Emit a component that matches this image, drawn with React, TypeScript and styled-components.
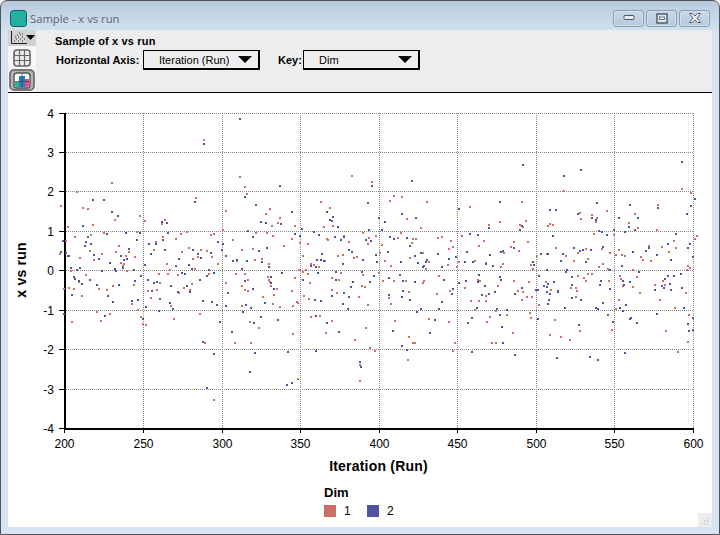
import React from 'react';
import styled, { createGlobalStyle } from 'styled-components';

type Point = [number, number];

const GlobalStyle = createGlobalStyle`
  html, body {
    margin: 0;
    padding: 0;
    background: #ffffff;
  }
`;

const parsePoints = (raw: string): Point[] =>
    raw.trim().split(/\s+/).map((pair) => {
        const [x, y] = pair.split(',').map(Number);
        return [x, y] as Point;
    });

// upper half of the plot, in page pixels
const RED_TOP = parsePoints(`
204,140 112,183 77,192 196,198 61,206 83,208 88,209 140,216 115,220 165,220
68,227 93,225 145,221 162,224 75,237 91,235 104,233 137,232 163,237 176,239 181,234 187,232 211,235 214,234
66,241 156,242 119,246 154,250 189,248 90,251 116,252 129,252 182,252 201,250 207,251 102,254 126,256 60,254
80,258 94,260 135,257 198,257 193,259 212,257 121,263 124,264 123,266 167,264 218,264 71,271 127,271 170,270 195,269
240,177 352,176 372,182 245,187 247,194 394,196 402,197 390,201 321,202 427,202 330,208 270,209 226,211 266,214 280,218
407,219 278,223 272,226 295,226 324,227 333,226 421,228 223,230 256,233 267,233 363,233 401,233 273,236 344,236 376,236
292,239 327,239 328,240 233,240 369,238 398,238 413,239 416,239 438,238 442,237 451,241 300,243 308,244 349,242 368,244
412,243 284,246 382,245 453,247 242,250 253,249 449,249 380,253 343,255 338,256 303,256 354,258 357,257 410,258 423,253
255,260 262,259 237,261 325,261 385,261 429,262 459,262 269,264 311,264 314,265 319,267 391,266 448,265 457,267 426,269 299,270 306,270
682,189 564,191 691,193 522,202 470,207 658,205 607,211 580,213 635,214 592,215 581,219 597,218 526,221 500,222 596,222
629,223 550,224 553,225 548,226 489,225 520,225 523,227 638,228 657,230 594,234 614,235 462,236 697,236 695,239 484,241
514,242 528,242 674,241 479,246 511,247 556,248 649,246 662,247 676,248 586,249 602,249 619,250 519,251 504,253 578,253
610,253 669,252 547,254 537,256 566,256 616,255 622,255 625,256 641,257 588,259 643,260 651,261 475,261 574,261 486,263
503,264 531,265 603,264 501,267 533,269 599,267 608,269 688,266 690,268 633,270 687,270
`);

const BLUE_TOP = parsePoints(`
204,144 93,200 104,200 195,202 112,212 118,216 83,226 162,222 167,223 107,234 126,233 140,233 168,233 88,237 137,240 163,240
63,241 86,242 91,244 85,246 149,244 156,244 218,242 129,249 165,250 193,250 61,252 66,253 94,255 121,256 151,254 198,254 211,253
68,256 69,256 99,259 124,260 127,259 179,259 201,258 110,263 145,265 176,266 189,265 71,268 80,268 115,269 123,268 192,269 77,270
240,119 280,186 372,186 412,181 245,197 256,205 368,203 292,212 327,212 402,214 459,209 333,217 330,220 332,221 379,218 416,218
261,222 266,223 281,224 385,222 338,227 302,229 248,231 369,230 382,230 314,232 295,234 319,235 300,236 253,237 335,237 344,237
390,237 394,239 407,238 341,240 366,240 371,241 223,244 410,246 267,248 222,250 259,251 349,250 352,252 388,252 421,253 322,254
376,255 438,254 226,256 415,256 456,257 317,260 321,260 324,261 233,261 237,260 247,261 363,260 427,260 449,259 262,262 377,262
401,262 426,262 343,264 418,263 311,266 316,267 269,267 424,266 442,267 423,267 242,269
523,165 682,162 581,170 564,176 500,202 597,203 630,205 658,208 691,206 695,199 550,210 556,210 578,214 687,214 592,218 619,218
638,218 596,220 629,227 489,228 522,226 520,230 599,231 602,232 614,230 625,232 635,230 470,234 478,235 553,236 607,235 676,234
690,244 668,244 603,247 574,248 514,248 649,248 688,248 591,250 583,250 580,251 467,252 501,252 503,251 633,252 646,251 541,254
548,254 563,254 490,255 657,255 693,257 561,261 671,260 465,262 473,262 533,262 586,262 486,264 534,265 493,266 622,266 547,270
567,270 610,270
`);

// lower half, sparse points read off the screenshot
const RED_LOW = parsePoints(`
64,289 69,288 74,289 79,282 82,296 86,275 97,312 99,289 107,290 110,314 113,286 132,304 134,285 138,310 141,317 143,324 146,325
148,291 151,298 157,290 159,274 160,283 168,274 171,306 174,319 178,275 179,293 184,288 190,290 192,284 200,314 209,274 72,322 101,321
214,400 205,343 360,381 360,365 408,360 375,351 453,351 496,343 298,379 370,348 250,322 293,334 487,322 678,352 612,330 561,337
`);

const BLUE_LOW = parsePoints(`
72,295 74,277 75,279 79,281 82,284 90,280 97,285 102,271 108,296 113,302 116,271 119,285 132,301 134,270 135,281 138,300 141,276
143,319 146,307 148,280 152,291 154,283 157,282 160,299 170,303 171,286 173,309 178,292 182,273 185,274 187,286 190,292 200,280
203,301 207,276 209,270 212,302 214,273 217,305 220,322 64,314 105,316 159,311
207,388 287,385 360,362 361,367 250,372 288,352 316,351 292,383 214,354 203,342 255,353 472,352 515,355 407,350 590,357 598,360
625,353 557,358 402,346 339,332 430,333 693,318
`);

// rest of the lower cloud from a seeded generator
const scatterLow = (seed: number, count: number): Point[] => {
    let s = seed;
    const next = () => {
        s = (s * 1664525 + 1013904223) % 4294967296;
        return s / 4294967296;
    };
    const list: Point[] = [];
    for (let i = 0; i < count; i++) {
        const x = Math.round(222 + next() * 472);
        const spread = Math.abs(Math.sqrt(-2 * Math.log(next() + 0.0001)) * Math.cos(6.283 * next()));
        list.push([x, Math.round(272 + Math.min(spread, 2.1) * 34)]);
    }
    return list;
};

const RED_POINTS = [...RED_TOP, ...RED_LOW, ...scatterLow(17, 125)];
const BLUE_POINTS = [...BLUE_TOP, ...BLUE_LOW, ...scatterLow(4242, 125)];

const X_TICKS = [
    { x: 64.5, label: '200' },
    { x: 143.5, label: '250' },
    { x: 222.5, label: '300' },
    { x: 300.5, label: '350' },
    { x: 379.5, label: '400' },
    { x: 457.5, label: '450' },
    { x: 536.5, label: '500' },
    { x: 614.5, label: '550' },
    { x: 693.5, label: '600' },
];

const Y_TICKS = [
    { y: 113.5, label: '4' },
    { y: 152.5, label: '3' },
    { y: 191.5, label: '2' },
    { y: 231.5, label: '1' },
    { y: 270.5, label: '0' },
    { y: 310.5, label: '-1' },
    { y: 349.5, label: '-2' },
    { y: 389.5, label: '-3' },
    { y: 428.5, label: '-4' },
];

const RED = '#cc6f66';
const BLUE = '#50549c';

const PlotChart = () => (
    <Plot viewBox="8 93 704 387" width={704} height={387}>
        {Y_TICKS.map((t) => (
            <g key={t.label}>
                <line x1={66} x2={693} y1={t.y} y2={t.y} stroke="#888" strokeDasharray="1 1" />
                <line x1={59} x2={65} y1={t.y} y2={t.y} stroke="#000" />
                <TickText x={54} y={t.y + 4.5} textAnchor="end">{t.label}</TickText>
            </g>
        ))}
        {X_TICKS.map((t, i) => (
            <g key={t.label}>
                {i > 0 && <line x1={t.x} x2={t.x} y1={113} y2={428} stroke="#888" strokeDasharray="1 1" />}
                <line x1={t.x} x2={t.x} y1={428} y2={433} stroke="#000" />
                <TickText x={t.x} y={447.5} textAnchor="middle">{t.label}</TickText>
            </g>
        ))}
        <rect x={64} y={113} width={2} height={317} fill="#000" />
        <rect x={64} y={428} width={630} height={2} fill="#000" />
        {RED_POINTS.map(([x, y], i) => (
            <rect key={`r${i}`} x={x - 1} y={y - 1} width={2} height={2} fill={RED} />
        ))}
        {BLUE_POINTS.map(([x, y], i) => (
            <rect key={`b${i}`} x={x - 1} y={y - 1} width={2} height={2} fill={BLUE} />
        ))}
        <AxisTitle x={378.5} y={471} textAnchor="middle">Iteration (Run)</AxisTitle>
        <AxisTitle x={0} y={0} textAnchor="middle" transform="translate(26 270) rotate(-90)">x vs run</AxisTitle>
    </Plot>
);

const AppIcon = () => (
    <svg width="17" height="17" viewBox="0 0 17 17">
        <rect x="0.5" y="0.5" width="16" height="16" rx="3" fill="#17b5a6" stroke="#2f4f58" />
        <path d="M8.5 1.5v14M1.5 8.5h14" stroke="#5b9c98" />
    </svg>
);

const ScatterGlyph = () => (
    <svg width="28" height="16" viewBox="0 0 28 16">
        <path d="M3.5 1v12.5H19" fill="none" stroke="#222" />
        <path
            d="M6 11h1M8 9h1M10 11h1M7 7h1M10 7h1M12 9h1M14 11h1M9 5h1M12 5h1M14 7h1M16 9h1M11 3h1M14 4h1"
            stroke="#333"
        />
        <path d="M18 5h9l-4.500 5z" fill="#000" />
    </svg>
);

const GridGlyph = () => (
    <svg width="18" height="18" viewBox="0 0 18 18">
        <rect x="1" y="1" width="16" height="16" rx="3" fill="#ececec" stroke="#666" strokeWidth="1.600" />
        <path d="M6.500 1v16M11.500 1v16M1 6.500h16M1 11.500h16" stroke="#666" strokeWidth="1.200" />
    </svg>
);

const ColorGridGlyph = () => (
    <svg width="18" height="17" viewBox="0 0 18 17">
        <rect x="1" y="1" width="16" height="15" rx="3" fill="#fff" stroke="#555" strokeWidth="1.400" />
        <path d="M2 10h4v5H4.500A2.500 2.500 0 0 1 2 12.500z" fill="#1fb58f" />
        <rect x="6" y="4" width="6" height="11" fill="#1d82c8" />
        <path d="M12 7h4v5.500a2.500 2.500 0 0 1-2.500 2.500H12z" fill="#e2478f" />
        <path d="M2 9.500h14M9 1.500v14" stroke="#444" strokeWidth="0.800" />
    </svg>
);

const Minimize = () => (
    <svg width="14" height="8" viewBox="0 0 14 8">
        <rect x="0.500" y="1.500" width="10" height="4" rx="1" fill="#e9edf2" stroke="#4a5566" transform="translate(1.500 0)" />
    </svg>
);

const Maximize = () => (
    <svg width="12" height="11" viewBox="0 0 12 11">
        <rect x="1" y="1" width="10" height="9" fill="#dfe6ee" stroke="#4a5566" strokeWidth="1.400" />
        <rect x="3.500" y="4" width="5" height="2.500" fill="#f4f6f8" stroke="#4a5566" strokeWidth="0.800" />
    </svg>
);

const CloseIcon = () => (
    <svg width="14" height="12" viewBox="0 0 14 12">
        <path d="M1.500 1.500h3L7 4l2.500-2.500h3L9 6l3.500 4.500h-3L7 8l-2.500 2.500h-3L5 6z" fill="#eef1f4" stroke="#59626f" />
    </svg>
);

export default function App() {
    return (
        <>
            <GlobalStyle />
            <Window>
                <TitleBar>
                    <AppIcon />
                    <WindowTitle>Sample - x vs run</WindowTitle>
                    <WindowButtons>
                        <WindowButton><Minimize /></WindowButton>
                        <WindowButton><Maximize /></WindowButton>
                        <WindowButton><CloseIcon /></WindowButton>
                    </WindowButtons>
                </TitleBar>
                <Panel>
                    <Toolbar>
                        <ToolColumn>
                            <StyleButton><ScatterGlyph /></StyleButton>
                            <GridButton><GridGlyph /></GridButton>
                            <ColorButton><ColorGridGlyph /></ColorButton>
                        </ToolColumn>
                        <Controls>
                            <Heading>Sample of x vs run</Heading>
                            <ControlRow>
                                <Label>Horizontal Axis:</Label>
                                <Dropdown>
                                    <span>Iteration (Run)</span>
                                    <Arrow />
                                </Dropdown>
                                <KeyLabel>Key:</KeyLabel>
                                <Dropdown>
                                    <span>Dim</span>
                                    <Arrow />
                                </Dropdown>
                            </ControlRow>
                        </Controls>
                    </Toolbar>
                    <PlotChart />
                    <Legend>
                        <LegendTitle>Dim</LegendTitle>
                        <LegendRow>
                            <Swatch $color={RED} />
                            <LegendValue>1</LegendValue>
                            <Swatch $color={BLUE} />
                            <LegendValue>2</LegendValue>
                        </LegendRow>
                    </Legend>
                    <Grip>
                        <svg width="14" height="14" viewBox="0 0 14 14">
                            <path d="M9 5h2M6 8h2M9 8h2M3 11h2M6 11h2M9 11h2" stroke="#a9a9a9" strokeWidth="1.200" strokeDasharray="1.200 1" />
                        </svg>
                    </Grip>
                </Panel>
            </Window>
        </>
    );
}

const Window = styled.div`
  width: 720px;
  height: 535px;
  box-sizing: border-box;
  display: flex;
  flex-direction: column;
  border: 1px solid #4f5358;
  border-radius: 7px 7px 0 0;
  background: linear-gradient(180deg, #b7cbdd 0px, #d6e4f2 34px);
  overflow: hidden;
`;

const TitleBar = styled.div`
  height: 29px;
  flex: none;
  box-sizing: border-box;
  display: flex;
  align-items: center;
  padding: 5px 9px 0 9px;
`;

const WindowTitle = styled.div`
  margin-left: 3px;
  font: 11.25px "Open Sans", "Liberation Sans", sans-serif;
  color: #5d6670;
`;

const WindowButtons = styled.div`
  margin-left: auto;
  display: flex;
  gap: 2px;
`;

const WindowButton = styled.div`
  width: 31px;
  height: 17px;
  box-sizing: border-box;
  display: flex;
  align-items: center;
  justify-content: center;
  border: 1px solid #8a9fb6;
  border-radius: 3px;
  background: linear-gradient(180deg, #c8d8e8, #b6cade);
  box-shadow: inset 0 0 0 1px #d4e0ec;
`;

const Panel = styled.div`
  position: relative;
  flex: 1;
  margin: 0 7px 7px 7px;
  background: #ffffff;
`;

const Toolbar = styled.div`
  height: 63px;
  box-sizing: border-box;
  display: flex;
  background: #ededed;
  border-bottom: 1px solid #000;
`;

const ToolColumn = styled.div`
  width: 28px;
  display: flex;
  flex-direction: column;
  align-items: center;
  background: #f7f7f7;
`;

const StyleButton = styled.div`
  width: 28px;
  height: 16px;
  background: #d2d2d2;
  line-height: 0;
`;

const GridButton = styled.div`
  height: 18px;
  margin-top: 3px;
  line-height: 0;
`;

const ColorButton = styled.div`
  width: 26px;
  height: 22px;
  box-sizing: border-box;
  margin-top: 2px;
  display: flex;
  align-items: center;
  justify-content: center;
  border: 2px solid #777;
  border-radius: 5px;
  background: #b4b4b4;
`;

const Controls = styled.div`
  display: flex;
  flex-direction: column;
  padding: 5px 0 0 19px;
`;

const Heading = styled.div`
  font: bold 11px "Liberation Sans", Arial, sans-serif;
  letter-spacing: 0.15px;
  color: #000;
  line-height: 13px;
`;

const ControlRow = styled.div`
  display: flex;
  align-items: center;
  margin-top: 2px;
  margin-left: 1px;
`;

const Label = styled.div`
  width: 87px;
  font: bold 11px "Liberation Sans", Arial, sans-serif;
  color: #000;
`;

const KeyLabel = styled(Label)`
  width: 25px;
  margin-left: 18px;
`;

const Dropdown = styled.div`
  width: 117px;
  height: 20px;
  box-sizing: border-box;
  display: flex;
  align-items: center;
  justify-content: space-between;
  padding: 0 6px 0 15px;
  border: 1px solid #000;
  border-right-width: 2px;
  border-bottom-width: 2px;
  background: #efefef;
  font: 11px "Liberation Sans", Arial, sans-serif;
  color: #000;
`;

const Arrow = styled.div`
  width: 0;
  height: 0;
  border-left: 7px solid transparent;
  border-right: 7px solid transparent;
  border-top: 7px solid #000;
`;

const Plot = styled.svg`
  display: block;
`;

const TickText = styled.text`
  font: 12px "Liberation Sans", Arial, sans-serif;
  fill: #000;
`;

const AxisTitle = styled.text`
  font: bold 14px "Liberation Sans", Arial, sans-serif;
  letter-spacing: 0.2px;
  fill: #000;
`;

const Legend = styled.div`
  margin: 5px 0 0 316px;
`;

const LegendTitle = styled.div`
  font: bold 13px "Liberation Sans", Arial, sans-serif;
  line-height: 15px;
  color: #000;
`;

const LegendRow = styled.div`
  display: flex;
  align-items: center;
  margin-top: 4px;
`;

const Swatch = styled.div<{ $color: string }>`
  width: 12px;
  height: 12px;
  background: ${(p) => p.$color};
`;

const LegendValue = styled.div`
  width: 31px;
  padding-left: 8px;
  box-sizing: border-box;
  font: 12px "Liberation Sans", Arial, sans-serif;
  color: #000;
`;

const Grip = styled.div`
  position: absolute;
  right: 0;
  bottom: 0;
  width: 14px;
  height: 14px;
  line-height: 0;
  background: #eeeeee;
`;
